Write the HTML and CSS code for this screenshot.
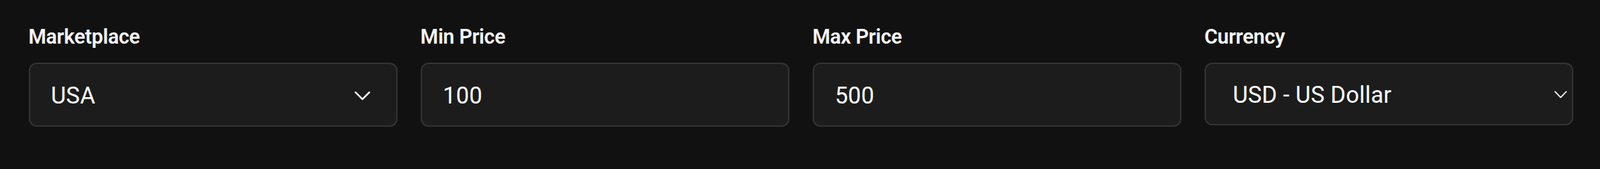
FILE: index.html
```html
<!DOCTYPE html>
<html lang="en">
<head>
<meta charset="utf-8">
<title>Filters</title>
<link rel="stylesheet" href="styles.css">
</head>
<body>
<div class="filters">
  <div class="field">
    <label class="label">Marketplace</label>
    <div class="box box-select">
      <span class="value">USA</span>
      <svg class="chev" width="22" height="13" viewBox="0 0 22 13"><polyline points="1.2,1.2 11,10.8 20.8,1.2" fill="none" stroke="#ffffff" stroke-width="2.4" stroke-linecap="round" stroke-linejoin="round"/></svg>
    </div>
  </div>
  <div class="field">
    <label class="label">Min Price</label>
    <div class="box"><span class="value">100</span></div>
  </div>
  <div class="field">
    <label class="label">Max Price</label>
    <div class="box"><span class="value">500</span></div>
  </div>
  <div class="field">
    <label class="label">Currency</label>
    <div class="box box-native">
      <span class="value">USD - US Dollar</span>
      <svg class="chev-small" width="18" height="11" viewBox="0 0 18 11"><polyline points="1,1.2 9,9.4 17,1.2" fill="none" stroke="#f2f2f2" stroke-width="1.8" stroke-linecap="round" stroke-linejoin="round"/></svg>
    </div>
  </div>
</div>
</body>
</html>
```

FILE: styles.css
```css
html, body {
  margin: 0;
  padding: 0;
  background: #111111;
}

body {
  font-family: Roboto, "Liberation Sans", sans-serif;
  color: #ffffff;
}

.filters {
  display: grid;
  grid-template-columns: repeat(4, 1fr);
  column-gap: 32.75px;
  padding: 38px 38px 0 40.5px;
}

.field {
  display: flex;
  flex-direction: column;
  gap: 22px;
  min-width: 0;
}

.label {
  font-size: 29px;
  line-height: 29px;
  font-weight: 600;
  letter-spacing: -0.3px;
  color: #f7f7f7;
}

.box {
  box-sizing: border-box;
  height: 91px;
  border: 2px solid #333333;
  border-radius: 11px;
  background: #1c1c1c;
  display: flex;
  align-items: center;
  padding: 2px 37px 0 30px;
}

.value {
  font-size: 33px;
  line-height: 1;
  letter-spacing: 0.2px;
  color: #ffffff;
  flex: 1;
  white-space: nowrap;
}

.box-select .chev {
  flex: none;
  margin-top: 2px;
}

.box-native {
  height: 89px;
  padding: 2px 7px 0 38.5px;
}

.box-native .chev-small {
  flex: none;
  margin-top: 0;
}
```
